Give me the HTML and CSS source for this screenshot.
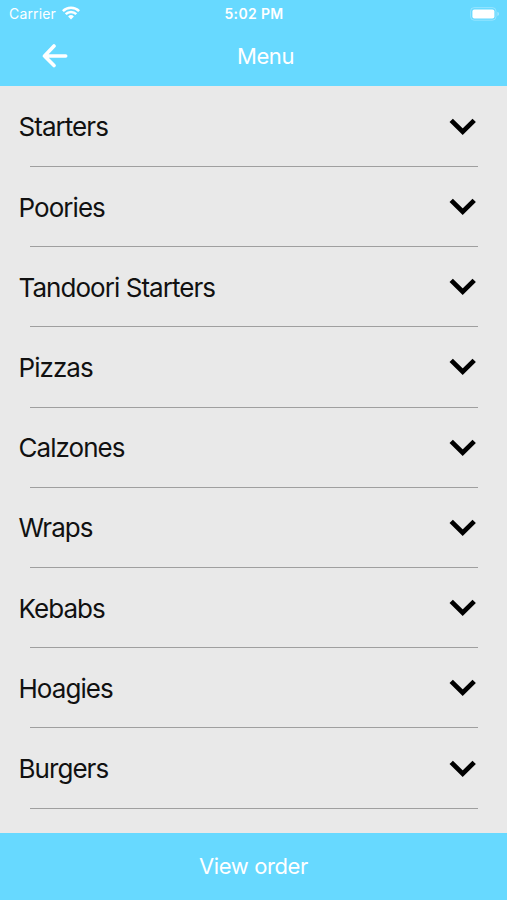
FILE: index.html
```html
<!DOCTYPE html>
<html lang="en">
<head>
  <meta charset="UTF-8">
  <meta name="viewport" content="width=device-width, initial-scale=1.0">
  <title>Menu</title>
  <link rel="stylesheet" href="styles.css">
</head>
<body>
  <svg width="0" height="0" class="defs">
    <symbol id="chevron" viewBox="0 0 28 18">
      <path d="M2.2 2.4 L13.7 13.6 L25.2 2.4" fill="none" stroke="#000" stroke-width="4.8" />
    </symbol>
  </svg>

  <div class="header">
    <div class="status">
      <div class="carrier">
        <span>Carrier</span>
        <svg class="wifi" width="18" height="14" viewBox="0 0 18 14" fill="none" stroke="#fff" stroke-width="2.5">
          <path d="M0.9 5.1 A11.5 11.5 0 0 1 17.1 5.1" />
          <path d="M3.7 8.2 A7.6 7.6 0 0 1 14.3 8.2" />
          <path d="M6.1 10.5 A4.1 4.1 0 0 1 11.9 10.5 L9 13.5 Z" fill="#fff" stroke="none" />
        </svg>
      </div>
      <span class="time">5:02 PM</span>
      <svg class="battery" width="30" height="14" viewBox="0 0 30 14">
        <rect x="0.6" y="0.6" width="25.4" height="12.6" rx="3.6" fill="none" stroke="#fff" stroke-opacity="0.3" />
        <rect x="2.4" y="2.4" width="22" height="9" rx="2" fill="#fff" />
        <path d="M27.4 4.8 Q29 5.4 29 6.9 Q29 8.4 27.4 9 Z" fill="#fff" fill-opacity="0.4" />
      </svg>
    </div>
    <div class="navbar">
      <svg class="back" width="26" height="24" viewBox="0 0 26 24" fill="none" stroke="#fff" stroke-width="3.6" stroke-linecap="round" stroke-linejoin="round">
        <path d="M12 2 L2.5 12 L12 21.5 M2.5 12 H23.7" />
      </svg>
      <span class="title">Menu</span>
    </div>
  </div>

  <div class="list">
    <div class="item"><span>Starters</span><svg class="chevron"><use href="#chevron" /></svg></div>
    <div class="item"><span>Poories</span><svg class="chevron"><use href="#chevron" /></svg></div>
    <div class="item"><span>Tandoori Starters</span><svg class="chevron"><use href="#chevron" /></svg></div>
    <div class="item"><span>Pizzas</span><svg class="chevron"><use href="#chevron" /></svg></div>
    <div class="item"><span>Calzones</span><svg class="chevron"><use href="#chevron" /></svg></div>
    <div class="item"><span>Wraps</span><svg class="chevron"><use href="#chevron" /></svg></div>
    <div class="item"><span>Kebabs</span><svg class="chevron"><use href="#chevron" /></svg></div>
    <div class="item"><span>Hoagies</span><svg class="chevron"><use href="#chevron" /></svg></div>
    <div class="item"><span>Burgers</span><svg class="chevron"><use href="#chevron" /></svg></div>
  </div>

  <div class="footer">View order</div>
</body>
</html>
```

FILE: styles.css
```css
* {
  box-sizing: border-box;
}
body {
  margin: 0;
  height: 900px;
  display: flex;
  flex-direction: column;
  overflow: hidden;
  background-color: #e9e9e9;
  font-family: Inter, "Liberation Sans", sans-serif;
}
.defs {
  position: absolute;
}
.header {
  height: 86px;
  background-color: #67d9ff;
  color: white;
}
.status {
  display: grid;
  grid-template-columns: 1fr auto 1fr;
  align-items: center;
  height: 27px;
  padding: 0 7px 0 9px;
  font-size: 14px;
}
.carrier {
  display: flex;
  align-items: center;
  gap: 6px;
  letter-spacing: 0.15px;
}
.wifi {
  margin-top: -2px;
}
.time {
  font-weight: 600;
  letter-spacing: 0.35px;
  margin-left: -1px;
}
.battery {
  justify-self: end;
}
.navbar {
  display: grid;
  grid-template-columns: 1fr auto 1fr;
  align-items: center;
  height: 58px;
  padding-left: 42px;
  padding-right: 42px;
}
.title {
  font-size: 22px;
  letter-spacing: -0.4px;
  margin-left: 24px;
}
.list {
  flex: 1;
  padding-top: 0.7px;
}
.item {
  display: flex;
  align-items: center;
  justify-content: space-between;
  height: 80.22px;
  padding: 0 30px 0 18.5px;
  font-size: 26px;
  letter-spacing: -0.95px;
  color: #111;
  background: linear-gradient(#9f9f9f, #9f9f9f) 30px 100% / 448px 1px no-repeat;
}
.chevron {
  width: 28px;
  height: 18px;
}
.footer {
  height: 67px;
  background-color: #67d9ff;
  color: white;
  font-size: 22px;
  letter-spacing: -0.4px;
  line-height: 67px;
  text-align: center;
}
```
